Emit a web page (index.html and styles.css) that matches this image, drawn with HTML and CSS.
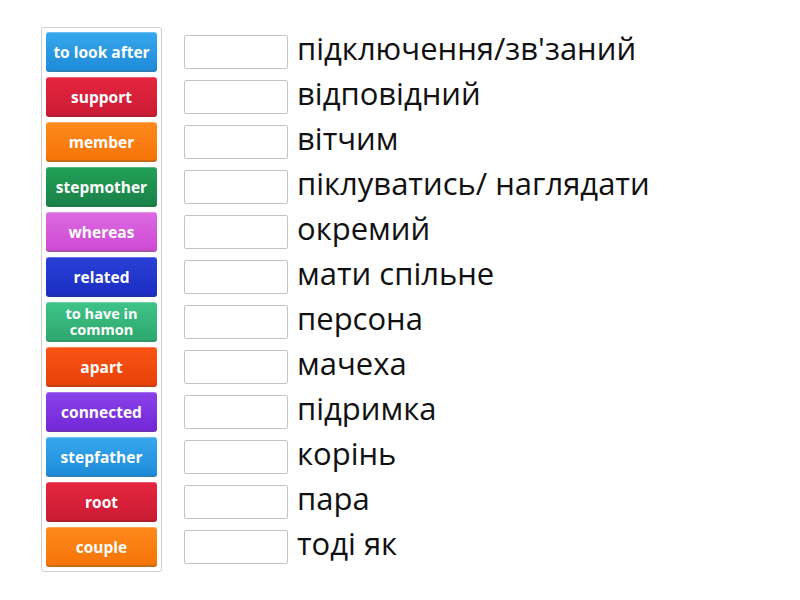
FILE: index.html
```html
<!DOCTYPE html>
<html>
<head>
	<meta charset="utf-8">
	<link rel="stylesheet" href="styles.css">
</head>
<body>
	<div class="game">
		<div class="tray">
			<div class="tile blue">to look after</div>
			<div class="tile red">support</div>
			<div class="tile orange">member</div>
			<div class="tile green">stepmother</div>
			<div class="tile pink">whereas</div>
			<div class="tile navy">related</div>
			<div class="tile mint two">to have in common</div>
			<div class="tile fire">apart</div>
			<div class="tile purple">connected</div>
			<div class="tile blue">stepfather</div>
			<div class="tile red">root</div>
			<div class="tile orange">couple</div>
		</div>
		<div class="answers">
			<div class="row"><span class="slot"></span><span class="word">підключення/зв'заний</span></div>
			<div class="row"><span class="slot"></span><span class="word">відповідний</span></div>
			<div class="row"><span class="slot"></span><span class="word">вітчим</span></div>
			<div class="row"><span class="slot"></span><span class="word">піклуватись/ наглядати</span></div>
			<div class="row"><span class="slot"></span><span class="word">окремий</span></div>
			<div class="row"><span class="slot"></span><span class="word">мати спільне</span></div>
			<div class="row"><span class="slot"></span><span class="word">персона</span></div>
			<div class="row"><span class="slot"></span><span class="word">мачеха</span></div>
			<div class="row"><span class="slot"></span><span class="word">підримка</span></div>
			<div class="row"><span class="slot"></span><span class="word">корінь</span></div>
			<div class="row"><span class="slot"></span><span class="word">пара</span></div>
			<div class="row"><span class="slot"></span><span class="word">тоді як</span></div>
		</div>
	</div>
</body>
</html>
```

FILE: styles.css
```css
body, html {
	height: 100%;
}

body {
	margin: 0;
	padding: 0;
	background: #fff;
	font-family: "Open Sans", "Noto Sans", sans-serif;
}

.game {
	display: flex;
	align-items: flex-start;
	padding: 27px 0 0 41px;
}

.tray {
	display: flex;
	flex-direction: column;
	gap: 5px;
	padding: 4px;
	border: 1px solid #cfcfcf;
	border-radius: 3px;
}

.tile {
	box-sizing: border-box;
	width: 111px;
	height: 40px;
	display: flex;
	align-items: center;
	justify-content: center;
	text-align: center;
	color: #fff;
	font-size: 15.5px;
	font-weight: 700;
	line-height: 17px;
	border-radius: 3px;
	border-bottom: 2px solid rgba(0,0,0,0.22);
	box-shadow: inset 0 1px 0 rgba(255,255,255,0.25);
	padding: 2px 5px 0;
}

.tile.two {
	font-size: 14.5px;
	line-height: 16px;
}

.blue   { background: linear-gradient(#37a8ee, #1e8bd8); }
.red    { background: linear-gradient(#e5263e, #cc1b35); }
.orange { background: linear-gradient(#ff8a1c, #f57408); }
.green  { background: linear-gradient(#22a158, #1a8247); }
.pink   { background: linear-gradient(#dd6ae2, #cd4bd3); }
.navy   { background: linear-gradient(#2a40d8, #1c2ec2); }
.mint   { background: linear-gradient(#3ec488, #2ea86e); }
.fire   { background: linear-gradient(#fb5314, #e8420a); }
.purple { background: linear-gradient(#8a42ea, #7428d8); }

.answers {
	display: flex;
	flex-direction: column;
	gap: 5px;
	margin-left: 22px;
	padding-top: 5px;
}

.row {
	height: 40px;
	display: flex;
	align-items: center;
}

.slot {
	box-sizing: border-box;
	width: 104px;
	height: 34px;
	border: 1px solid #c4c4c4;
	border-radius: 2px;
	background: #fff;
}

.word {
	margin: -8px 0 0 9px;
	font-size: 31px;
	line-height: 40px;
	color: #111;
	white-space: nowrap;
}
```
